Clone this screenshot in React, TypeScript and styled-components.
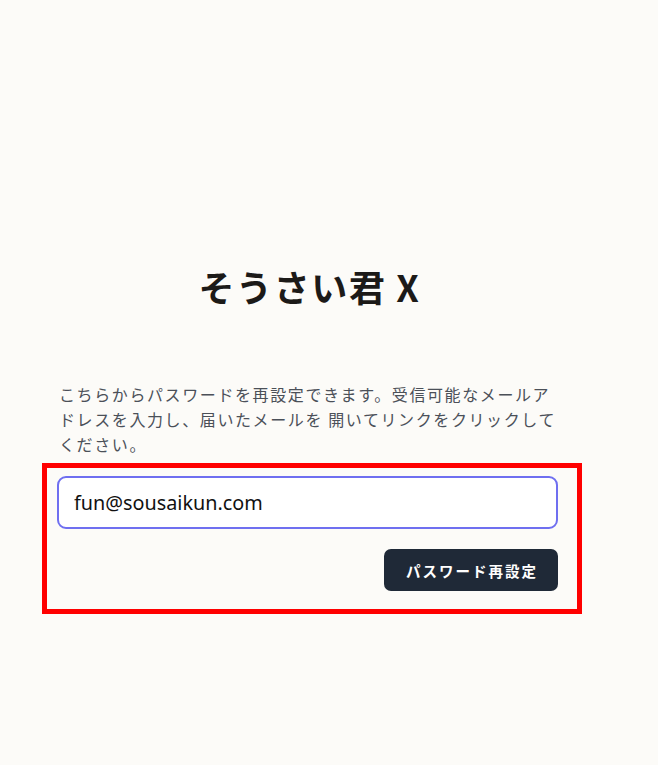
import React from "react";
import styled, { createGlobalStyle } from "styled-components";

const GlobalStyle = createGlobalStyle`
  html, body {
    margin: 0;
    padding: 0;
    background: #fcfbf8;
  }
  body {
    font-family: "Noto Sans CJK JP", "Noto Sans", sans-serif;
  }
  * { box-sizing: border-box; }
`;

const Page = styled.main`
  min-height: 765px;
  padding: 265px 0 0 57px;
`;

const Container = styled.div`
  width: 501px;
  display: flex;
  flex-direction: column;
`;

const Title = styled.h1`
  margin: 0;
  padding-left: 4px;
  font-family: "Noto Sans CJK JP", sans-serif;
  font-size: 36px;
  line-height: 43px;
  font-weight: 700;
  color: #1c1a18;
  text-align: center;
  letter-spacing: 0.045em;
`;

const Description = styled.p`
  margin: 74px 0 0 2px;
  font-family: "Noto Sans CJK JP", sans-serif;
  font-size: 16px;
  line-height: 25px;
  letter-spacing: 0.1em;
  color: #4b5058;
`;

const Highlight = styled.form`
  margin: 6px -24px 0 -15px;
  border: 5px solid #ff0000;
  padding: 8px 19px 18px 10px;
  display: flex;
  flex-direction: column;
  gap: 20px;
`;

const EmailInput = styled.input`
  width: 100%;
  height: 53px;
  border: 2px solid #6f6ff0;
  border-radius: 9px;
  background: #ffffff;
  padding: 0 15px;
  font-family: "Noto Sans", sans-serif;
  font-size: 19.8px;
  color: #111111;
  outline: none;
  caret-color: #000;
`;

const Actions = styled.div`
  display: flex;
  justify-content: flex-end;
`;

const SubmitButton = styled.button`
  height: 42px;
  width: 174px;
  border: none;
  border-radius: 7px;
  background: #1f2937;
  color: #ffffff;
  font-family: "Noto Sans CJK JP", sans-serif;
  font-size: 14.5px;
  font-weight: 700;
  letter-spacing: 0.14em;
  padding: 0 0 0 2px;
  cursor: pointer;
`;

export default function App() {
  return (
    <>
      <GlobalStyle />
      <Page>
        <Container>
          <Title>そうさい君 X</Title>
          <Description>
            こちらからパスワードを再設定できます。受信可能なメールアドレスを入力し、届いたメールを 開いてリンクをクリックしてください。
          </Description>
          <Highlight onSubmit={(e) => e.preventDefault()}>
            <EmailInput type="email" defaultValue="fun@sousaikun.com" autoFocus />
            <Actions>
              <SubmitButton type="submit">パスワード再設定</SubmitButton>
            </Actions>
          </Highlight>
        </Container>
      </Page>
    </>
  );
}
